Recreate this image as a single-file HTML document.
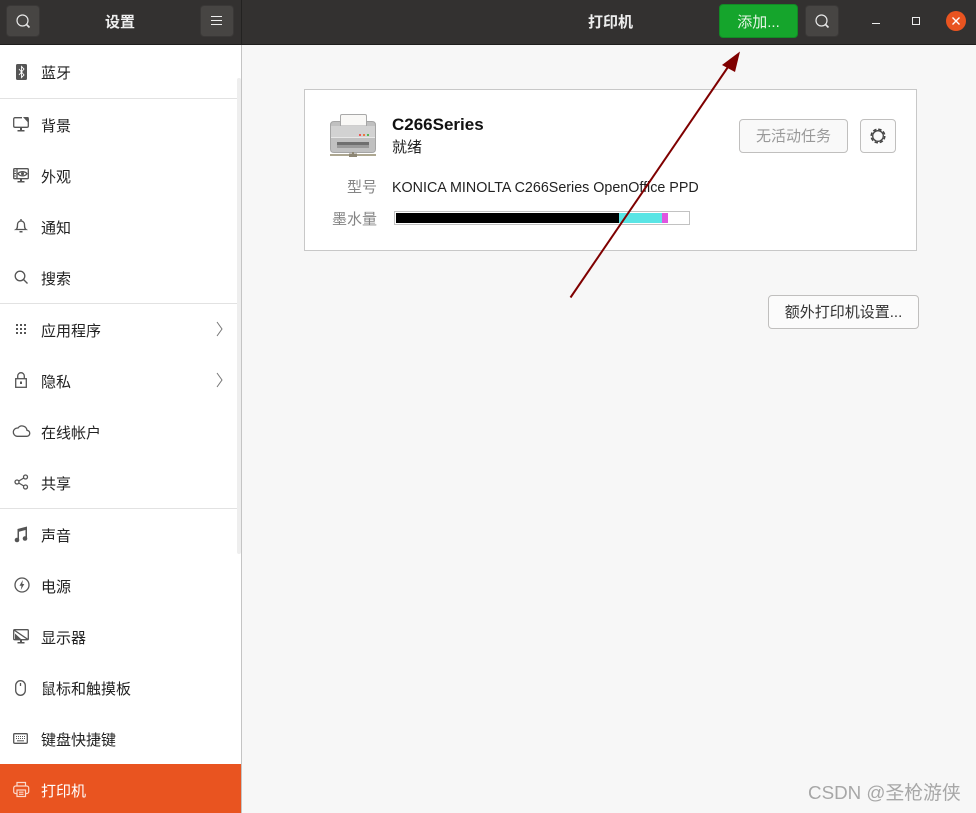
<!DOCTYPE html>
<html lang="zh"><head><meta charset="utf-8">
<style>
html,body{margin:0;padding:0;width:976px;height:813px;overflow:hidden;background:#f7f7f7;font-family:"Liberation Sans","Noto Sans CJK SC",sans-serif;color:#1e1e1e}
.a{position:absolute;white-space:nowrap}
#hd{left:0;top:0;width:976px;height:44px;background:#333130;border-bottom:1px solid #1f1e1d}
#vs{left:241px;top:0;width:1px;height:44px;background:#232221}
#side{left:0;top:45px;width:241px;height:768px;background:#fff;border-right:1px solid #c4c4c4}
.sep{position:absolute;left:0;width:241px;height:1px;background:#e2e2e2}
.t{position:absolute;left:41px;font-size:15px;line-height:20px;color:#222}
.hb{position:absolute;box-sizing:border-box;top:5px;width:34px;height:32px;background:#474543;border:1px solid #3a3837;border-radius:4px}
.btn{position:absolute;box-sizing:border-box;background:#fbfbfb;border:1px solid #c0bfbe;border-radius:4px;text-align:center;font-size:15px}
svg{position:absolute;overflow:visible}
.i{fill:none;stroke:#555;stroke-width:1.3}
.f{fill:#555;stroke:none}
</style></head><body>
<div class="a" id="hd"></div><div class="a" id="vs"></div>

<div class="hb" style="left:6px"></div>
<svg style="left:16px;top:14px" width="16" height="16"><circle cx="6.500" cy="6.500" r="5.500" fill="none" stroke="#e8e8e8" stroke-width="1.200"/><path d="M10.500 10.500l3 3" stroke="#e8e8e8" stroke-width="1.600"/></svg>
<div class="a" style="left:105px;top:13px;font-size:15px;line-height:20px;color:#eee;font-weight:bold">设置</div>
<div class="hb" style="left:200px"></div>
<svg style="left:211px;top:15px" width="12" height="12"><path d="M0 1.500h11M0 5.500h11M0 9.500h11" stroke="#f0f0f0" stroke-width="1.100"/></svg>
<div class="a" style="left:588px;top:13px;font-size:15px;line-height:20px;color:#eee;font-weight:bold">打印机</div>
<div class="a" style="left:719px;top:4px;width:79px;height:34px;box-sizing:border-box;background:#15a52c;border-radius:4px;border:1px solid #128a25;color:#e6f5e6;font-size:15px;line-height:35px;text-align:center">添加...</div>
<div class="hb" style="left:805px"></div>
<svg style="left:815px;top:14px" width="16" height="16"><circle cx="6.500" cy="6.500" r="5.500" fill="none" stroke="#e8e8e8" stroke-width="1.200"/><path d="M10.500 10.500l3 3" stroke="#e8e8e8" stroke-width="1.600"/></svg>
<div class="a" style="left:872px;top:23px;width:8px;height:1px;background:#eee"></div>
<div class="a" style="left:912px;top:17px;width:6px;height:6px;box-sizing:content-box;border:1px solid #eee"></div>
<div class="a" style="left:946px;top:11px;width:20px;height:20px;border-radius:50%;background:#e95420"></div>
<svg style="left:946px;top:11px" width="20" height="20"><path d="M6.500 6.500l7 7M13.500 6.500l-7 7" stroke="#fff" stroke-width="1.400"/></svg>

<div class="a" id="side">
<div class="sep" style="top:53px"></div>
<div class="sep" style="top:258px"></div>
<div class="sep" style="top:463px"></div>
<div style="position:absolute;left:237px;top:33px;width:4px;height:476px;background:#eeeeee;border-radius:2px"></div>
<div style="position:absolute;left:0;top:719px;width:241px;height:49px;background:#e95420"></div>
<div class="t" style="top:19px">蓝牙</div>
<div class="t" style="top:72px">背景</div>
<div class="t" style="top:123px">外观</div>
<div class="t" style="top:174px">通知</div>
<div class="t" style="top:225px">搜索</div>
<div class="t" style="top:277px">应用程序</div>
<div class="t" style="top:328px">隐私</div>
<div class="t" style="top:379px">在线帐户</div>
<div class="t" style="top:430px">共享</div>
<div class="t" style="top:482px">声音</div>
<div class="t" style="top:533px">电源</div>
<div class="t" style="top:584px">显示器</div>
<div class="t" style="top:635px">鼠标和触摸板</div>
<div class="t" style="top:686px">键盘快捷键</div>
<div class="t" style="top:737px;color:#fff">打印机</div>
</div>

<!-- sidebar icons -->
<svg style="left:16px;top:64px" width="11" height="16"><rect width="11" height="16" rx="1.500" fill="#555"/><path d="M3 5l5 6-2.500 2.500v-11L8 5l-5 6" fill="none" stroke="#fff" stroke-width=".9"/></svg>
<svg style="left:13px;top:117px" width="16" height="16"><path class="i" d="M9 .7H2A1.300 1.300 0 0 0 .7 2v7A1.300 1.300 0 0 0 2 10.300h12A1.300 1.300 0 0 0 15.300 9V2A1.300 1.300 0 0 0 14 .7h-1"/><path class="f" d="M10 0h5.500v6zM7 10.500h2V13h2.500v1.500h-7V13H7z"/></svg>
<svg style="left:13px;top:168px" width="16" height="16"><rect class="i" x=".7" y=".7" width="14.600" height="10" rx="1"/><path class="i" d="M4 1v9"/><path class="f" d="M7 11h2v2h2.500v1.500h-7V13H7zM1 2.500h2v1H1zM1 5h2v1H1zM1 7.500h2v1H1z"/><path class="i" d="M5 5.700C7 3 12 3 14 5.700 12 8.500 7 8.500 5 5.700z"/><circle class="f" cx="9.500" cy="5.700" r="1.500"/></svg>
<svg style="left:15px;top:219px" width="12" height="15"><path class="i" d="M1 10.500c1.500-1 1.500-2.500 1.500-5a3.500 3.500 0 0 1 7 0c0 2.500 0 4 1.500 5z"/><path class="f" d="M4.500 12h3v1.500h-3zM5.300 0h1.400v2H5.300z"/></svg>
<svg style="left:14px;top:270px" width="15" height="15"><circle class="i" cx="6" cy="6" r="4.800"/><path class="i" stroke-width="1.600" d="M9.500 9.500l4 4"/></svg>
<svg style="left:16px;top:324px" width="11" height="11"><g class="f"><rect width="2" height="2"/><rect x="4" width="2" height="2"/><rect x="8" width="2" height="2"/><rect y="4" width="2" height="2"/><rect x="4" y="4" width="2" height="2"/><rect x="8" y="4" width="2" height="2"/><rect y="8" width="2" height="2"/><rect x="4" y="8" width="2" height="2"/><rect x="8" y="8" width="2" height="2"/></g></svg>
<svg style="left:216px;top:321px" width="7" height="16"><path d="M1 1l5 7-5 7" fill="none" stroke="#777" stroke-width="1"/></svg>
<svg style="left:216px;top:372px" width="7" height="16"><path d="M1 1l5 7-5 7" fill="none" stroke="#777" stroke-width="1"/></svg>
<svg style="left:15px;top:372px" width="12" height="16"><rect class="i" x=".7" y="6.700" width="10.600" height="8.600"/><path class="i" d="M2.700 6.500V4a3.300 3.300 0 0 1 6.600 0v2.500"/><rect class="f" x="5" y="9.500" width="2" height="2.500"/></svg>
<svg style="left:13px;top:424px" width="17" height="13"><path class="i" d="M4 12.300h9.500a3 3 0 0 0 .5-6A5 5 0 0 0 5 4 4 4 0 0 0 4 12.300z"/></svg>
<svg style="left:14px;top:474px" width="15" height="16"><g class="i"><circle cx="3" cy="8" r="2"/><circle cx="11.500" cy="3" r="2"/><circle cx="11.500" cy="13" r="2"/><path d="M4.800 7l5-3M4.800 9l5 3"/></g></svg>
<svg style="left:14px;top:526px" width="14" height="16"><path class="f" d="M3.500 3L13 .5v12h-1.500V4L5 5.700V14H3.500z"/><circle class="f" cx="3" cy="14" r="2.300"/><circle class="f" cx="11" cy="12.500" r="2.300"/></svg>
<svg style="left:14px;top:577px" width="16" height="16"><circle class="i" cx="8" cy="8" r="7"/><path class="f" d="M8.800 3L5.500 8.700h2L6.800 13l3.500-6h-2z"/></svg>
<svg style="left:13px;top:629px" width="16" height="16"><rect class="i" x=".7" y=".7" width="14.600" height="10" rx="1"/><path class="i" d="M1 1l14 9.500"/><path class="f" d="M2 4.500l6 5.500H2zM7 11h2v2h2.500v1.500h-7V13H7z"/></svg>
<svg style="left:15px;top:680px" width="11" height="16"><rect class="i" x=".7" y=".7" width="9.600" height="14.600" rx="4.800"/><path class="i" d="M5.500 3v3"/></svg>
<svg style="left:13px;top:733px" width="16" height="12"><rect class="i" x=".7" y=".7" width="13.600" height="9.600" rx="1"/><path d="M3 3.500h9.500M3 5.500h9.500" stroke="#555" stroke-width="1" stroke-dasharray="1 1"/><path d="M4 7.800h7" stroke="#555" stroke-width="1"/></svg>
<svg style="left:13px;top:781px" width="17" height="17"><g fill="none" stroke="#fbd9cc" stroke-width="1.200"><path d="M4 5V1.500h8.500V5"/><path d="M4 12.500H2.500A1.800 1.800 0 0 1 .7 10.700V7A2 2 0 0 1 2.700 5h11A2 2 0 0 1 15.700 7v3.700a1.800 1.800 0 0 1-1.800 1.800h-1.400"/><rect x="4" y="9" width="8.500" height="6.500"/><path d="M6 11.200h4.500M6 13.300h4.500"/></g></svg>

<!-- main -->
<div class="a" style="left:304px;top:89px;width:613px;height:162px;box-sizing:border-box;background:#fff;border:1px solid #c8c8c8"></div>

<svg style="left:330px;top:114px" width="47" height="44">
<path d="M10.500 12V2q0-1.500 1.500-1.500h23q1.500 0 1.500 1.500v10z" fill="#f9f8f6" stroke="#a9a9a9"/>
<path d="M4 7.500h6.500V12h26V7.500H42q3.500 0 3.500 3.500v24q0 3.500-3.500 3.500H4Q.5 38.500.5 35V11Q.5 7.500 4 7.500z" fill="#c0c0c0" stroke="#a5a5a5"/>
<rect x="1" y="12" width="44" height="11" fill="#d2d2d2"/>
<rect x="1" y="23" width="44" height="1" fill="#e8e8e8"/>
<rect x="7" y="28" width="32" height="3" fill="#6f6f6f"/>
<rect x="7" y="31" width="32" height="3" fill="#9a9a9a"/>
<rect x="29" y="20" width="2" height="2" fill="#ee5555"/>
<rect x="33" y="20" width="2" height="2" fill="#e87a45"/>
<rect x="37" y="20" width="2" height="2" fill="#55b855"/>
<rect x="22" y="38" width="2" height="3" fill="#8d8674"/>
<rect x="0" y="40" width="46" height="2" fill="#aca690"/>
<rect x="19" y="39.500" width="8" height="3.500" fill="#8d8674"/>
</svg>

<div class="a" style="left:392px;top:113px;font-size:17px;line-height:24px;font-weight:bold;color:#111">C266Series</div>
<div class="a" style="left:392px;top:138px;font-size:15px;line-height:20px;color:#222">就绪</div>
<div class="a" style="left:347px;top:178px;font-size:15px;line-height:20px;color:#858585">型号</div>
<div class="a" style="left:392px;top:178px;font-size:14.300px;line-height:20px;color:#222">KONICA MINOLTA C266Series OpenOffice PPD</div>
<div class="a" style="left:332px;top:210px;font-size:15px;line-height:20px;color:#858585">墨水量</div>

<div class="a" style="left:394px;top:211px;width:296px;height:14px;box-sizing:border-box;background:#fff;border:1px solid #c2c2c2"></div>
<div class="a" style="left:396px;top:213px;width:223px;height:10px;background:#000"></div>
<div class="a" style="left:619px;top:213px;width:43px;height:10px;background:#5ae5e5"></div>
<div class="a" style="left:662px;top:213px;width:6px;height:10px;background:#e055e0"></div>

<div class="btn a" style="left:739px;top:119px;width:109px;height:34px;line-height:34px;color:#999;background:#f9f9f9">无活动任务</div>
<div class="btn a" style="left:860px;top:119px;width:36px;height:34px"></div>
<svg style="left:869px;top:127px" width="18" height="18"><circle cx="9" cy="9" r="5.300" fill="none" stroke="#444" stroke-width="1.300"/><circle cx="9" cy="9" r="6.800" fill="none" stroke="#444" stroke-width="1.500" stroke-dasharray="3.500 1.840"/></svg>
<div class="btn a" style="left:768px;top:295px;width:151px;height:34px;line-height:34px;color:#333">额外打印机设置...</div>

<!-- arrow -->
<svg style="left:0;top:0" width="976" height="813"><path d="M570.500 297.500L728 67" stroke="#7f0000" stroke-width="2" fill="none"/><path d="M740 51.500L722 65 735 72z" fill="#7f0000"/></svg>

<div class="a" style="left:808px;top:779px;font-size:18.800px;line-height:28px;color:#9a9a9a;opacity:.85">CSDN @圣枪游侠</div>
</body></html>
